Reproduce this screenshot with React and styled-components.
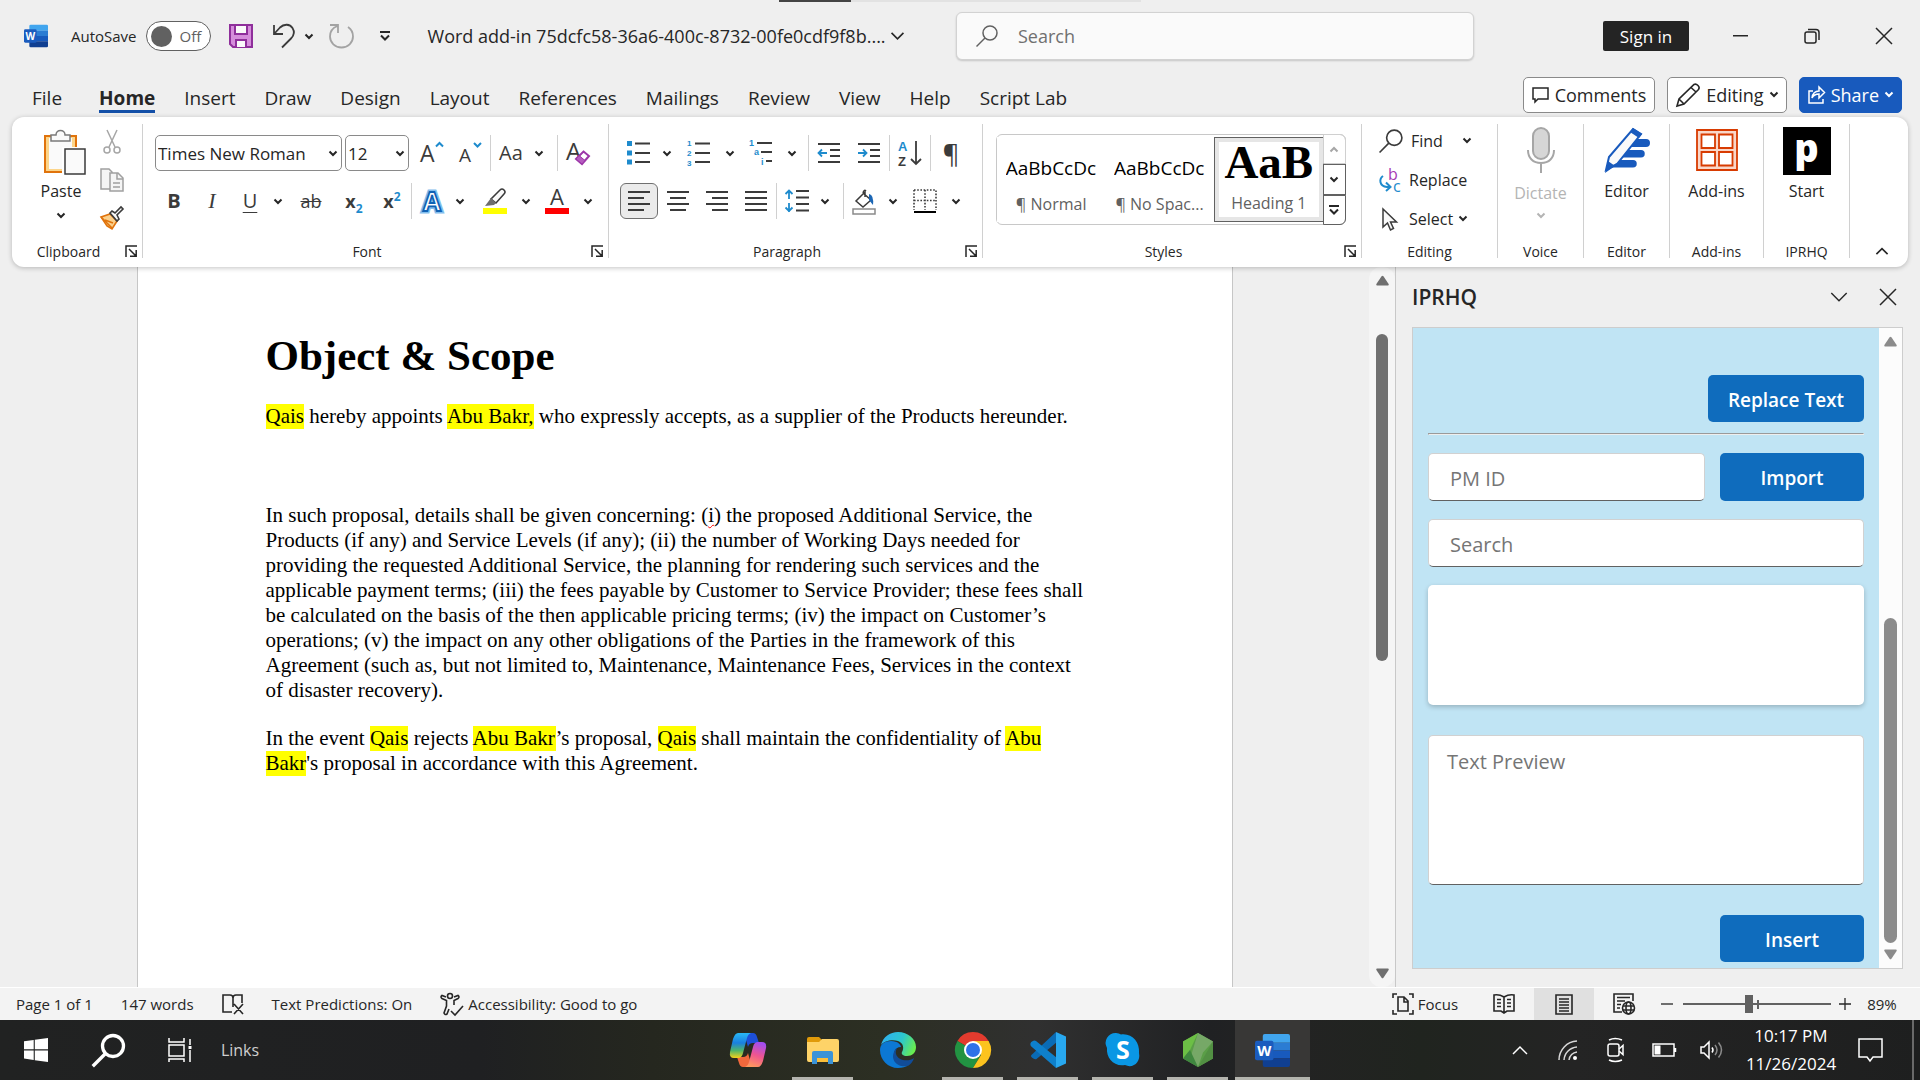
import React from "react";
import styled, { createGlobalStyle, css } from "styled-components";

const ui = `"Open Sans", "Noto Sans", sans-serif`;
const serif = `"Liberation Serif", "Times New Roman", serif`;
const ink = "#262626";
const line = "#d0d0d0";

const GlobalStyle = createGlobalStyle`
  * { box-sizing: border-box; }
  body { margin: 0; background: #efefef; color: ${ink}; font-family: ${ui}; font-size: 16px; overflow: hidden; }
  button, input, select, textarea { font-family: inherit; color: inherit; }
  button { cursor: pointer; }
  svg { display: block; flex: none; overflow: visible; }
`;

const Shell = styled.div`
  display: flex;
  flex-direction: column;
  height: 100vh;
`;

const PlainButton = styled.button`
  display: flex;
  align-items: center;
  justify-content: center;
  flex: none;
  width: ${(p) => (p.$w ? `${p.$w}px` : "auto")};
  height: ${(p) => p.$h || 36}px;
  padding: 0;
  border: 0;
  background: none;
`;

/* ---------- small shared drawings ---------- */

const Svg = ({ w = 24, h = w, vb, children, ...rest }) => (
  <svg width={w} height={h} viewBox={vb || `0 0 ${w} ${h}`} fill="none" aria-hidden="true" {...rest}>
    {children}
  </svg>
);

const Chevron = ({ w = 8, color = ink, up, stroke = 2 }) => (
  <Svg w={w} h={w / 2 + 1} vb="0 0 16 10" stroke={color} strokeWidth={(stroke * 16) / w}>
    <path d={up ? "M1 9l7-7 7 7" : "M1 1l7 7 7-7"} />
  </Svg>
);

const Cross = ({ s = 16 }) => (
  <Svg w={s} vb="0 0 16 16" stroke={ink} strokeWidth="1.5">
    <path d="M0 0l16 16M16 0L0 16" />
  </Svg>
);

const WordLogo = ({ s }) => (
  <Svg w={s} vb="0 0 36 36">
    <path d="M10 1h24a2 2 0 0 1 2 2v7H8V3a2 2 0 0 1 2-2z" fill="#41a5ee" />
    <path d="M8 10h28v8H8z" fill="#2b7cd3" />
    <path d="M8 18h28v8H8z" fill="#185abd" />
    <path d="M8 26h28v7a2 2 0 0 1-2 2H10a2 2 0 0 1-2-2z" fill="#103f91" />
    <rect x="0" y="8" width="19" height="20" rx="2" fill="#1b5cbe" />
    <text x="9.5" y="23.500" fontFamily="Open Sans" fontWeight="700" fontSize="15" fill="#fff" textAnchor="middle">W</text>
  </Svg>
);

/* ---------- title bar ---------- */

const TitleBar = styled.header`
  display: flex;
  align-items: center;
  flex: none;
  height: 72px;
  padding: 0 0 0 24px;
`;

const Row = styled.div`
  display: flex;
  align-items: center;
  gap: ${(p) => p.$gap || 0}px;
`;

const TitleLeft = styled(Row)`
  flex: 0 0 932px;
`;

const Loader = styled.div`
  position: absolute;
  top: 0;
  left: 779px;
  width: 362px;
  height: 2px;
  background: linear-gradient(90deg, #444 20%, #e2e2e2 20%);
`;

const AutoSave = styled.label`
  display: flex;
  align-items: center;
  gap: 9px;
  margin: 0 18px 0 23px;
  font-size: 15px;
  input { position: absolute; opacity: 0; width: 1px; height: 1px; }
`;

const Track = styled.span`
  display: flex;
  align-items: center;
  gap: 8px;
  width: 65px;
  height: 30px;
  padding-left: 4px;
  border: 1px solid #616161;
  border-radius: 15px;
  background: #fff;
  color: #616161;
  &::before {
    content: "";
    width: 21px;
    height: 21px;
    border-radius: 50%;
    background: #616161;
  }
`;

const DocName = styled.span`
  font-size: 18px;
  margin: 0 4px 0 38px;
  white-space: nowrap;
`;

const SearchBox = styled.label`
  display: flex;
  align-items: center;
  gap: 20px;
  flex: 0 1 518px;
  height: 48px;
  padding: 0 19px;
  border: 1px solid #d2d2d2;
  border-radius: 6px;
  background: #fafafa;
  box-shadow: 0 1px 2px rgba(0, 0, 0, 0.18);
  input {
    flex: 1;
    min-width: 0;
    border: 0;
    outline: 0;
    background: none;
    font-size: 18px;
    padding: 0;
  }
  input::placeholder { color: #707070; opacity: 1; }
`;

const WindowTools = styled(Row)`
  margin-left: auto;
`;

const SignIn = styled.button`
  width: 86px;
  height: 30px;
  margin-right: 15px;
  padding: 0;
  border: 0;
  border-radius: 2px;
  background: #242424;
  color: #fff;
  font-size: 17px;
`;

/* ---------- tabs ---------- */

const TabBar = styled.nav`
  display: flex;
  align-items: center;
  flex: none;
  height: 45px;
  padding: 0 18px 0 32px;
`;

const Tabs = styled.div`
  display: flex;
  gap: 29px;
`;

const Tab = styled.button`
  height: 36px;
  padding: 5px 0 0;
  border: 0;
  background: none;
  font-size: 19px;
  line-height: 32px;
  font-weight: ${(p) => (p.$on ? 700 : 400)};
  border-bottom: 3px solid ${(p) => (p.$on ? "#1450a8" : "transparent")};
  &:first-child { margin-right: 8px; }
`;

const TabActions = styled(Row)`
  margin-left: auto;
  gap: 12px;
`;

const ActionButton = styled.button`
  display: flex;
  align-items: center;
  gap: 6px;
  height: 36px;
  padding: 0 8px;
  border: 1px solid ${(p) => (p.$primary ? "#185abd" : "#8a8a8a")};
  border-radius: 5px;
  background: ${(p) => (p.$primary ? "#185abd" : "#fff")};
  color: ${(p) => (p.$primary ? "#fff" : ink)};
  font-size: 18px;
`;

/* ---------- ribbon ---------- */

const Ribbon = styled.section`
  display: flex;
  flex: none;
  height: 150px;
  margin: 0 12px;
  padding: 7px 0 9px;
  border-radius: 12px;
  background: #fff;
  box-shadow: 0 1px 5px rgba(0, 0, 0, 0.24);
  position: relative;
  z-index: 1;
`;

const GroupBox = styled.div`
  display: flex;
  flex-direction: column;
  flex: 0 0 ${(p) => p.$w}px;
  border-right: 1px solid ${line};
`;

const GroupBody = styled.div`
  flex: 1;
  min-height: 0;
`;

const GroupFoot = styled.div`
  display: flex;
  align-items: center;
  height: 14px;
  padding-right: ${(p) => (p.$launch ? 5 : 0)}px;
  font-size: 14px;
  line-height: 14px;
  span { flex: 1; text-align: center; padding-top: 2px; }
`;

const Launcher = () => (
  <PlainButton $w={12} $h={12} aria-label="More options">
    <Svg w={12} stroke={ink} strokeWidth="1.5">
      <path d="M1 12V1h11M4 4l7 7M11.200 5v6.200H5" />
    </Svg>
  </PlainButton>
);

const Group = ({ w, label, launch, children }) => (
  <GroupBox $w={w}>
    <GroupBody>{children}</GroupBody>
    <GroupFoot $launch={launch}>
      <span>{label}</span>
      {launch && <Launcher />}
    </GroupFoot>
  </GroupBox>
);

const ToolRows = styled.div`
  display: flex;
  flex-direction: column;
  gap: 12px;
  padding: 11px 0 0 ${(p) => p.$left}px;
`;

const Tool = styled(PlainButton)`
  ${(p) =>
    p.$on &&
    css`
      border: 1px solid #707070;
      border-radius: 6px;
      background: #ebebeb;
    `}
`;

const Rule = styled.span`
  width: 1px;
  height: 36px;
  background: ${line};
  margin-left: ${(p) => p.$gap || 0}px;
`;

const Combo = styled.span`
  display: flex;
  align-items: center;
  width: ${(p) => p.$w}px;
  height: 36px;
  margin-right: 3px;
  padding: 0 4px 0 2px;
  border: 1px solid #8a8a8a;
  border-radius: 5px;
  select {
    appearance: none;
    flex: 1;
    min-width: 0;
    border: 0;
    outline: 0;
    background: none;
    font-size: 17px;
    padding: 0;
  }
`;

const Letter = styled.span`
  font-size: ${(p) => p.$s || 20}px;
  line-height: 24px;
  font-weight: ${(p) => (p.$bold ? 700 : 400)};
  font-style: ${(p) => (p.$italic ? "italic" : "normal")};
  font-family: ${(p) => (p.$italic ? serif : ui)};
  text-decoration: ${(p) => p.$deco || "none"};
  text-underline-offset: 4px;
  text-decoration-thickness: 1px;
  color: #3b3b3b;
  sub, sup { font-size: 12px; line-height: 0; color: #1e8bcd; }
`;

const Drop = ({ w = 18, label = "More" }) => (
  <PlainButton $w={w} aria-label={label}>
    <Chevron />
  </PlainButton>
);

const ClipRow = styled.div`
  display: flex;
  justify-content: space-between;
  padding: 0 12px 0 26px;
`;

const BigButton = styled.button`
  display: flex;
  flex-direction: column;
  align-items: center;
  gap: ${(p) => p.$gap || 5}px;
  width: ${(p) => (p.$w ? `${p.$w}px` : "100%")};
  padding: 3px 0 0;
  border: 0;
  background: none;
  font-size: 16px;
  line-height: 22px;
  color: ${(p) => (p.$off ? "#b4b4b4" : ink)};
`;

const ClipTools = styled.div`
  display: flex;
  flex-direction: column;
  align-items: center;
  gap: 2px;
  width: 36px;
`;

const Gallery = styled.div`
  display: flex;
  height: 91px;
  margin: 10px 15px 0 13px;
  border: 1px solid #c8c8c8;
  border-radius: 6px;
`;

const StyleItem = styled.button`
  display: flex;
  flex-direction: column;
  align-items: center;
  justify-content: flex-end;
  flex: 1;
  min-width: 0;
  margin: 2px 0;
  padding: 0 0 3px;
  border: ${(p) => (p.$on ? "1px solid #616161" : "0")};
  background: #fff;
  box-shadow: ${(p) => (p.$on ? "inset 0 0 0 4px #e6e6e6" : "none")};
  font-size: 16px;
  line-height: 30px;
  color: #616161;
  overflow: hidden;
  white-space: nowrap;
`;

const Sample = styled.span`
  width: 91px;
  overflow: hidden;
  font-size: 19px;
  line-height: 26px;
  color: #000;
  text-align: left;
  margin-bottom: 8px;
`;

const BigSample = styled.span`
  font: 700 47px/44px ${serif};
  color: #000;
  margin-bottom: 4px;
`;

const GalleryNav = styled.div`
  display: flex;
  flex-direction: column;
  flex: none;
  width: 23px;
  margin: -1px;
`;

const NavStep = styled(PlainButton)`
  flex: 1;
  width: 100%;
  border: 1px solid ${(p) => (p.$off ? "#d0d0d0" : "#616161")};
  border-radius: ${(p) => p.$r || "0"};
`;

const FindList = styled.div`
  display: flex;
  flex-direction: column;
  margin-top: -3px;
  padding-left: 17px;
`;

const FindButton = styled.button`
  display: flex;
  align-items: center;
  height: 39px;
  padding: 0;
  border: 0;
  background: none;
  font-size: 16px;
  gap: ${(p) => p.$gap || 0}px;
  svg:first-child { margin-right: 8px; }
`;

const CollapseBox = styled.div`
  display: flex;
  flex: 1;
  align-items: flex-end;
  justify-content: center;
  padding-left: 6px;
`;

/* ---------- workspace ---------- */

const Workspace = styled.main`
  display: flex;
  flex: 1;
  min-height: 0;
`;

const Canvas = styled.div`
  display: flex;
  justify-content: center;
  flex: 1;
  min-width: 0;
`;

const Page = styled.article`
  width: 1096px;
  padding: 64px 120px 0 128px;
  border: solid #c6c6c6;
  border-width: 0 1px;
  background: #fff;
  color: #000;
  font-family: ${serif};
`;

const Heading = styled.h1`
  margin: 0 0 23px;
  font-size: 43px;
  line-height: 50px;
`;

const Para = styled.p`
  margin: 0 0 ${(p) => p.$after || 0}px;
  font-size: 21px;
  line-height: 25px;
  white-space: nowrap;
`;

const Mark = styled.mark`
  background: #ff0;
  color: inherit;
  padding-bottom: 1px;
`;

const Misspelt = styled.span`
  text-decoration: underline wavy #f00 1px;
  text-underline-offset: 2px;
`;

const ScrollTrack = styled.div`
  display: flex;
  flex-direction: column;
  align-items: center;
  flex: none;
  width: ${(p) => p.$w}px;
  padding: 8px 0;
  border-radius: ${(p) => p.$r || 0}px;
  background: ${(p) => p.$bg};
`;

const Thumb = styled.div`
  width: ${(p) => p.$w}px;
  flex: 0 0 ${(p) => p.$len}%;
  border-radius: 7px;
  background: ${(p) => p.$c};
`;

const ThumbRail = styled.div`
  display: flex;
  flex-direction: column;
  flex: 1;
  width: 100%;
  align-items: center;
`;

const Gap = styled.div`
  flex: 0 0 ${(p) => p.$len}%;
`;

const Triangle = ({ down, c, w = 13, h = 11 }) => (
  <Svg w={w} h={h} vb="0 0 14 11" fill={c}>
    <path d={down ? "M1 0h12q1.200 0.500 0.600 1.600L8 10q-1 1.300-2 0L0.400 1.600Q-0.200 0.500 1 0z" : "M1 11h12q1.200-0.500 0.600-1.600L8 1Q7-0.300 6 1L0.400 9.400Q-0.200 10.500 1 11z"} />
  </Svg>
);

const Pane = styled.aside`
  display: flex;
  flex-direction: column;
  flex: 0 0 525px;
  border-left: 1px solid #c8c8c8;
  padding: 0 17px 18px 16px;
`;

const PaneHead = styled.div`
  display: flex;
  align-items: center;
  flex: none;
  height: 60px;
  h2 { flex: 1; margin: 0; font-size: 21px; font-weight: 600; }
`;

const PaneFrame = styled.div`
  display: flex;
  flex: 1;
  min-height: 0;
  border: 1px solid #cdcdcd;
`;

const PaneForm = styled.form`
  display: flex;
  flex-direction: column;
  justify-content: flex-end;
  flex: 1;
  min-width: 0;
  padding: 0 15px 6px;
  background: #c0e4f4;
  hr { width: 100%; margin: 11px 0 18px; }
`;

const FormRow = styled.div`
  display: flex;
  justify-content: flex-end;
  gap: 15px;
`;

const field = css`
  border: 1px solid #d1d1d1;
  border-bottom-color: #616161;
  border-radius: 5px;
  outline: 0;
  background: #fff;
  font-size: 20px;
  width: 100%;
  &::placeholder { color: #757575; opacity: 1; }
`;

const Field = styled.input`
  ${field}
  flex: 1;
  min-width: 0;
  height: 48px;
  padding: 2px 21px 0;
`;

const SearchRow = styled.div`
  display: flex;
  margin: 18px 0;
`;

const Results = styled.div`
  height: 120px;
  border-radius: 5px;
  background: #fff;
  box-shadow: 0 2px 5px rgba(0, 0, 0, 0.22);
`;

const Preview = styled.textarea`
  ${field}
  display: block;
  height: 150px;
  margin: 30px 0;
  padding: 12px 18px;
  line-height: 28px;
  resize: none;
`;

const Submit = styled.button`
  width: ${(p) => p.$w || 144}px;
  height: ${(p) => p.$h || 47}px;
  padding: 2px 0 0;
  border: 0;
  border-radius: 5px;
  background: #0f6cbd;
  color: #fff;
  font-size: 19px;
  font-weight: 600;
`;

/* ---------- status bar ---------- */

const StatusBar = styled.footer`
  display: flex;
  align-items: center;
  flex: none;
  height: 33px;
  padding: 0 9px 0 16px;
  border-top: 1px solid #fff;
  background: #f3f3f3;
  font-size: 15px;
`;

const StatusButton = styled.button`
  display: flex;
  align-items: center;
  justify-content: center;
  gap: 4px;
  height: 32px;
  padding: 0;
  border: 0;
  background: ${(p) => (p.$on ? "#e0e0e0" : "none")};
  width: ${(p) => (p.$w ? `${p.$w}px` : "auto")};
  font-size: 15px;
`;

const StatusRight = styled(Row)`
  margin-left: auto;
`;

const ZoomRange = styled.input`
  appearance: none;
  width: 148px;
  height: 18px;
  margin: 0 6px 0 3px;
  background: linear-gradient(#616161, #616161) 74px 50% / 2px 9px no-repeat,
    linear-gradient(#616161, #616161) 0 50% / 100% 2px no-repeat;
  &::-webkit-slider-thumb {
    appearance: none;
    width: 8px;
    height: 18px;
    background: #616161;
  }
`;

/* ---------- task bar ---------- */

const TaskBar = styled.div`
  display: flex;
  flex: none;
  height: 60px;
  background: linear-gradient(90deg, #212222, #1f2022 25%, #25271f 34%, #2c2f23 46%, #303030 54%, #202123 63%, #232323 67%, #20241f 74%, #242424 82%, #1e1f1f);
  color: #fff;
`;

const TaskStart = styled(Row)`
  flex: 0 0 37%;
  color: #cfcfcf;
`;

const TaskButton = styled.button`
  display: flex;
  align-items: center;
  justify-content: center;
  width: ${(p) => p.$w || 75}px;
  height: 60px;
  padding: 0;
  border: 0;
  background: none;
  color: inherit;
  font-size: 16px;
  ${(p) =>
    p.$open &&
    css`
      background: ${p.$on ? "linear-gradient(#b4b4ae, #b4b4ae) 0 100% / 100% 3px no-repeat, #383736" : "linear-gradient(#b4b4ae, #b4b4ae) 50% 100% / 61px 3px no-repeat"};
    `}
`;

const Tray = styled(Row)`
  flex: 1;
  justify-content: flex-end;
  align-items: center;
`;

const Clock = styled.time`
  width: 110px;
  text-align: center;
  font-size: 17px;
  line-height: 28px;
`;

const Peek = styled.span`
  align-self: stretch;
  width: 8px;
  border-left: 2px solid #6a6a6a;
  margin-left: 18px;
`;

/* ---------- icon drawings ---------- */

const dark = "#3b3b3b";
const blue = "#1e8bcd";

const SaveIcon = () => (
  <Svg w={24} stroke="#8f2f9b" strokeWidth="2">
    <path d="M1 1h22v22H4l-3-3z" fill="#d58ddb" />
    <path d="M6 1h12v9H6zM7 23v-7h10v7" fill="#fafafa" />
  </Svg>
);
const UndoIcon = () => (
  <Svg w={24} stroke={dark} strokeWidth="1.800">
    <path d="M2 1v9h9M2 10L8 3.500C12-0.500 18 0 20.500 4s1 8-1.500 10.500L10 23.500" />
  </Svg>
);
const RedoIcon = () => (
  <Svg w={26} h={24} stroke="#a3a3a3" strokeWidth="1.800">
    <path d="M1 1h8v8M8.500 2C3 4 1 8.500 1 12.500a11.500 11 0 0 0 23 0c0-4-2-7.500-5-9.500" />
  </Svg>
);
const MoreCommands = () => (
  <Svg w={10} h={10} stroke={ink} strokeWidth="2">
    <path d="M0 1h10M1 4.500l4 4 4-4" />
  </Svg>
);
const Lens = ({ s = 22, c = "#616161", sw = 1.5 }) => (
  <Svg w={s} vb="0 0 22 22" stroke={c} strokeWidth={sw}>
    <circle cx="14" cy="8" r="7" />
    <path d="M9 13L0.500 21.500" />
  </Svg>
);
const PasteIcon = () => (
  <Svg w={48} h={42} vb="-7 -3 48 42" strokeWidth="2">
    <path d="M1 6h31v36H1z" fill="#fcd58a" stroke="#e0730c" />
    <path d="M5 8h23v31H5z" fill="#fafafa" />
    <path d="M7 11V5h5c0-6 9-6 9 0h5v6z" fill="#fafafa" stroke="#7a7a7a" strokeWidth="1.500" />
    <path d="M18 17h23v28H18z" fill="#fff" />
    <path d="M21 19h20v25H21z" fill="#fafafa" stroke={dark} strokeWidth="1.500" />
  </Svg>
);
const CutIcon = () => (
  <Svg w={18} h={24} stroke="#a6a6a6" strokeWidth="1.500">
    <path d="M4 0l8 17M14 0L6 17" />
    <circle cx="4" cy="20" r="3" />
    <circle cx="14" cy="20" r="3" />
  </Svg>
);
const CopyIcon = () => (
  <Svg w={24} stroke="#a0a0a0" strokeWidth="1.500">
    <path d="M1 1h8l3 3v17H1z" fill="#f5f5f5" />
    <path d="M10 5h8l5 5v13H10z" fill="#f5f5f5" />
    <path d="M17 5v6h6M13 15h7M13 19h7" />
  </Svg>
);
const PainterIcon = () => (
  <Svg w={24} strokeWidth="1.600">
    <path d="M1 11l9-3 7 7-5 8-5-3z" fill="#fbd08b" stroke="#e0730c" />
    <path d="M1 11l11 11M5 14l8 3" stroke="#e0730c" />
    <path d="M10 7l2-2 3 2 6-6 2 2-6 6 2 4-2 2z" fill="#fafafa" stroke={dark} />
  </Svg>
);
const CaseUp = ({ down }) => (
  <Svg w={24}>
    <text x="0" y={21} fontFamily="Open Sans" fontSize={down ? 19 : 23} fill={dark}>A</text>
    <path d={down ? "M15 2l3.500 3.500L22 2" : "M16 5.500L19.500 2 23 5.500"} stroke={blue} strokeWidth="2" />
  </Svg>
);
const ClearFmt = () => (
  <Svg w={24}>
    <text x="0" y="19" fontFamily="Open Sans" fontSize="24" fill={dark}>A</text>
    <path d="M17.500 10.500l5.500 4.500-7 8-6-5z" fill="#fff" stroke="#9c36a8" strokeWidth="2" />
    <path d="M10 18l3-3.500 6 5L16 23z" fill="#b65cc0" stroke="#9c36a8" />
  </Svg>
);
const TextFx = () => (
  <Svg w={24}>
    <text x="12" y="22" textAnchor="middle" fontFamily="Open Sans" fontWeight="700" fontSize="26" fill="#fff" stroke="#83beec" strokeWidth="5" paintOrder="stroke">A</text>
    <path d="" />
    <text x="12" y="22" textAnchor="middle" fontFamily="Open Sans" fontWeight="700" fontSize="26" fill="#fff" stroke="#0f62b4" strokeWidth="1.800">A</text>
  </Svg>
);
const HighlightIcon = () => (
  <Svg w={24} h={26}>
    <path d="M8 11L17 2q2-2 4 0t0 4l-8 9z" stroke={dark} strokeWidth="1.600" fill="#fafafa" />
    <path d="M8 10l5 5-2 2-9 1z" fill="#6e6e6e" />
    <path d="M0 20h24v6H0z" fill="#ff0" />
  </Svg>
);
const FontColor = () => (
  <Svg w={24} h={26}>
    <text x="12" y="17" textAnchor="middle" fontFamily="Open Sans" fontSize="22" fill={dark}>A</text>
    <path d="M0 20h24v6H0z" fill="#f00" />
  </Svg>
);
const ListIcon = ({ kind }) => (
  <Svg w={24}>
    <g stroke={dark} strokeWidth="1.800">
      {kind === "multi" ? <path d="M8 2h15M12 11h11M17 20h6" /> : <path d="M8 2.500h15M8 12h15M8 21h15" />}
    </g>
    {kind === "bullet" && <path d="M0 0h5v5H0zM0 9.500h5v5H0zM0 18.500h5v5H0z" fill={blue} />}
    {kind === "number" && (
      <g fontFamily="Liberation Sans" fontWeight="700" fontSize="8" fill={blue}>
        <text x="0" y="5">1</text>
        <text x="0" y="15">2</text>
        <text x="0" y="25">3</text>
      </g>
    )}
    {kind === "multi" && (
      <g fontFamily="Liberation Sans" fontWeight="700" fontSize="9" fill={blue}>
        <text x="0" y="5">1</text>
        <text x="5" y="14">a</text>
        <text x="12" y="24">i</text>
      </g>
    )}
  </Svg>
);
const IndentIcon = ({ right }) => (
  <Svg w={22} h={20} strokeWidth="1.800">
    <path d="M0 1h22M12 7h10M12 13h10M0 19h22" stroke={dark} />
    <path d={right ? "M0 10h8M5 6.500L8.500 10 5 13.500" : "M1 10h8M4 6.500L0.500 10 4 13.500"} stroke={blue} />
  </Svg>
);
const SortIcon = () => (
  <Svg w={26} h={26}>
    <g fontFamily="Liberation Sans" fontWeight="700" fontSize="13">
      <text x="1" y="11" fill={blue}>A</text>
      <text x="1" y="26" fill={dark}>Z</text>
    </g>
    <path d="M19 1v23M14 19l5 5 5-5" stroke={dark} strokeWidth="1.800" />
  </Svg>
);
const AlignIcon = ({ d }) => (
  <Svg w={22} h={20} stroke={dark} strokeWidth="1.800">
    <path d={d} />
  </Svg>
);
const SpacingIcon = () => (
  <Svg w={24} strokeWidth="1.800">
    <path d="M11 2h13M11 8.500h13M11 15h13M11 21.500h13" stroke={dark} />
    <path d="M4 1v9M0.500 5L4 1.500 7.500 5M4 14v9M0.500 18.500L4 22l3.500-3.500" stroke={blue} />
  </Svg>
);
const ShadeIcon = () => (
  <Svg w={24} h={25} strokeWidth="1.500">
    <path d="M11 4l8 7-8 7-7-6 9-9v5M11 4q1-4 3-2" stroke={dark} />
    <path d="M17 5q5 1 4 11l-4-5z" fill="#1b66b5" />
    <path d="M1 20h22v5H1z" fill="#fff" stroke="#8a8a8a" />
  </Svg>
);
const BorderIcon = () => (
  <Svg w={24}>
    <path d="M1 1h22v20M1 1v20M12 1v20M1 11.500h22" stroke={dark} strokeWidth="1.600" strokeDasharray="1.600 1.600" />
    <path d="M1 23h22" stroke="#000" strokeWidth="2" />
  </Svg>
);
const ReplaceIcon = () => (
  <Svg w={22} h={24}>
    <g fontFamily="Open Sans" fontSize="16">
      <text x="9" y="12" fill="#a63ab4">b</text>
      <text x="14" y="24" fill={blue}>c</text>
    </g>
    <path d="M4 8c-4 3-4 10 4 11h3M7 14.500l4.500 4.500L7 23" stroke={blue} strokeWidth="2" />
  </Svg>
);
const CursorIcon = () => (
  <Svg w={22} h={24} stroke={dark} strokeWidth="1.500">
    <path d="M4 2v18l4.500-4 3 7 3-1.500-3-6.500h6z" fill="#fafafa" />
  </Svg>
);
const MicIcon = () => (
  <Svg w={28} h={46} stroke="#a6a6a6" strokeWidth="2">
    <rect x="6" y="1" width="16" height="31" rx="8" fill="#d6d6d6" />
    <path d="M1 23c0 8 5 13 13 13s13-5 13-13M14 36v10" />
  </Svg>
);
const EditorIcon = () => (
  <Svg w={46} h={46}>
    <path d="M26 12h16a4 4 0 0 1 0 8H20zM18 23h19a3.700 3.700 0 0 1 0 7.500H14zM12 33h17a3.700 3.700 0 0 1 0 7.500H7z" fill="#185abd" />
    <path d="M2 43L5 30 29 2l8 5-24 30z" fill="#fafafa" stroke="#185abd" strokeWidth="2" />
    <path d="M29 1l9 6-3 4-9-6zM1 46l3-12 7 5z" fill="#185abd" />
  </Svg>
);
const AddinsIcon = () => (
  <Svg w={42} h={46} vb="0 -2 42 46" stroke="#d83b01" strokeWidth="1.800">
    <path d="M1 1h40v40H1z" fill="#f9d7c9" />
    <path d="M5.500 5.500h13.500v13.500h-13.500zM23 5.500h13.500v13.500h-13.500zM5.500 23h13.500v13.500h-13.500zM23 23h13.500v13.500h-13.500z" fill="#fff" />
  </Svg>
);
const StartLogo = styled.span`
  display: flex;
  align-items: center;
  justify-content: center;
  width: 48px;
  height: 48px;
  padding-bottom: 9px;
  background: #000;
  color: #fff;
  font: 800 38px/38px ${ui};
`;
const ProofIcon = () => (
  <Svg w={22} stroke={ink} strokeWidth="1.600">
    <path d="M10 19H1V2h7q3 0 3 3 0-3 3-3h6v8M11 5v9M12 11l9 10M21 11l-9 10" />
  </Svg>
);
const AccessIcon = () => (
  <Svg w={24} stroke={ink} strokeWidth="1.600">
    <circle cx="10" cy="4" r="2.500" />
    <path d="M6 5L2 3.500Q0 5 2 6.500l4.500 2V14L4 21q1 2.500 3 1l2-5M14 5l4-1.500q2 1.500 0 3l-4 2V13M11 19l4 4 8-9" />
  </Svg>
);
const FocusIcon = () => (
  <Svg w={22} stroke={ink} strokeWidth="1.600">
    <path d="M5 1H1v4M17 1h4v4M5 21H1v-4M17 21h4v-4M6 4h6l4 4v10H6zM12 4v5h4" />
  </Svg>
);
const ReadIcon = () => (
  <Svg w={22} h={20} stroke={ink} strokeWidth="1.600">
    <path d="M11 3Q6 0 1 1v16h7l3 2 3-2h7V1q-5-1-10 2zM11 3v15M4 5.500h4M4 9h4M4 12.500h4M14 5.500h4M14 9h4M14 12.500h4" />
  </Svg>
);
const PrintIcon = () => (
  <Svg w={18} h={21} stroke={ink} strokeWidth="1.600">
    <path d="M1 1h16v19H1zM4 5h10M4 8h10M4 11h10M4 14h10M4 17h10" />
  </Svg>
);
const WebIcon = () => (
  <Svg w={22} stroke={ink} strokeWidth="1.600">
    <path d="M20 8V1H1v18h8M4 4.500h13M4 8h8M4 11.500h4M4 15h3" />
    <circle cx="15.500" cy="15" r="6" />
    <ellipse cx="15.500" cy="15" rx="2.500" ry="6" />
    <path d="M10 13h11M10 17h11" />
  </Svg>
);
const PlusMinus = ({ plus }) => (
  <Svg w={12} stroke={ink} strokeWidth="1.300">
    <path d={plus ? "M0 6h12M6 0v12" : "M0 6h12"} />
  </Svg>
);

const WindowsIcon = () => (
  <Svg w={24}>
    <path fill="#fff" d="M0 3.200l9.700-1.300v9.400H0zM10.800 1.700L24 0v11.300H10.800zM0 12.500h9.700v9.400L0 20.600zM10.800 12.500H24V24l-13.200-1.800z" />
  </Svg>
);
const TaskViewIcon = () => (
  <Svg w={24} stroke="#fff" strokeWidth="1.500">
    <path d="M1 0v4h15V0M1 7h15v11H1zM1 24v-3h15v3M22 1v6M22 12v12" />
    <path d="M20.500 8h3v3h-3z" fill="#fff" stroke="none" />
  </Svg>
);
const CopilotIcon = () => (
  <Svg w={36} h={34}>
    <defs>
      <linearGradient id="cpA" x1="0" y1="0" x2="0" y2="1">
        <stop offset="0" stopColor="#29b8f5" />
        <stop offset="0.400" stopColor="#1a7fe0" />
        <stop offset="0.700" stopColor="#4fb56a" />
        <stop offset="1" stopColor="#f5d21a" />
      </linearGradient>
      <linearGradient id="cpB" x1="0.600" y1="0" x2="0.300" y2="1">
        <stop offset="0" stopColor="#a24df0" />
        <stop offset="0.500" stopColor="#ef5590" />
        <stop offset="1" stopColor="#ff9a5c" />
      </linearGradient>
    </defs>
    <path d="M14 0h9q3 0 4 4l2 6h-6q-4 0-5 4z" fill="#1d4fd8" />
    <path d="M22 34h-9q-3 0-4-4l-2-6h6q4 0 5-4z" fill="#f2683c" />
    <path d="M8 0h13q-3 1-4 5l-4 15q-1 5-5 5H4q-5 0-4-6L3 6q2-6 5-6z" fill="url(#cpA)" />
    <path d="M28 34H15q3-1 4-5l4-15q1-5 5-5h4q5 0 4 6l-3 13q-2 6-5 6z" fill="url(#cpB)" />
  </Svg>
);
const FolderIcon = () => (
  <Svg w={32} h={27}>
    <path d="M0 2q0-2 2-2h10l3 3-3 4H0z" fill="#e09a0a" />
    <path d="M0 5h12l3-3h15q2 0 2 2v19q0 2-2 2H2q-2 0-2-2z" fill="#fed368" />
    <path d="M5 27V16q0-2 2-2h17q2 0 2 2v11h-5v-6H10v6z" fill="#3a93d8" />
    <path d="M10 21h11v4H10z" fill="#fbbf3a" />
  </Svg>
);
const EdgeIcon = () => (
  <Svg w={36}>
    <defs>
      <linearGradient id="egA" x1="0" y1="0.300" x2="1" y2="0.600">
        <stop offset="0" stopColor="#2fb0f0" />
        <stop offset="0.550" stopColor="#2cc7cd" />
        <stop offset="1" stopColor="#6bee4c" />
      </linearGradient>
    </defs>
    <path d="M1 13C3 5 10 0 18 0c10 0 18 7 18 15 0 6-4 9-9 9-4 0-6-2-5-4 2-3 2-9-4-11C12 7 4 9 1 13z" fill="url(#egA)" />
    <path d="M0 18C0 12 5 9 11 9c7 0 10 4 10 6-7 0-9 8-5 14 3 4 9 6 13 4-3 2-7 3-11 3C8 36 0 28 0 18z" fill="#0c78d4" />
    <path d="M14 20c-4 9 5 16 13 14 4-1 6-5 7-8-5 4-16 3-18-4-0.500-2 0-4 1-6-2 1-2.500 2.500-3 4z" fill="#114c98" />
  </Svg>
);
const ChromeIcon = () => (
  <Svg w={36}>
    <path d="M18 18L2.400 9A18 18 0 0 1 33.600 9z" fill="#e33b2e" />
    <path d="M18 18L2.400 9A18 18 0 0 0 18 36l8-13.500z" fill="#229342" />
    <path d="M18 9h15.600A18 18 0 0 1 18 36l8-13z" fill="#fcc31e" />
    <circle cx="18" cy="18" r="9" fill="#fff" />
    <circle cx="18" cy="18" r="7" fill="#2f72e8" />
  </Svg>
);
const CodeIcon = () => (
  <Svg w={36}>
    <path d="M26 0L2.500 22q-3 2 0 4t4 1L27 10z" fill="#0a6bb5" />
    <path d="M26 36L0.800 14Q-0.500 11 2 9.500T6 9l21 17z" fill="#0e80cc" />
    <path d="M26 0l10 4.500v27L26 36z" fill="#28a8f0" />
  </Svg>
);
const SkypeIcon = () => (
  <Svg w={34}>
    <path d="M10 0a10 10 0 0 0-9 15c-1 10 7 19 18 17 8 4 16-3 14-12C34 9 26 0 15 1.500Q13 0 10 0z" fill="#0a97e4" />
    <text x="17" y="26" textAnchor="middle" fontFamily="Open Sans" fontWeight="700" fontSize="25" fill="#fff">S</text>
  </Svg>
);
const NodeIcon = () => (
  <Svg w={30} h={34}>
    <path d="M15 0l15 8.500v17L15 34 0 25.500v-17z" fill="#5a9e47" />
    <path d="M15 0L7 17 0 25.500v-17z" fill="#6cbf45" />
    <path d="M15 0l15 8.500-10 11L15 34l-8-8z" fill="#76a867" />
    <path d="M0 25.500L7 17l8 17z" fill="#3f873f" />
    <path d="M30 8.500v17L15 34z" fill="#529043" />
  </Svg>
);
const WifiIcon = () => (
  <Svg w={20} stroke="#d8d8d8" strokeWidth="1.500">
    <path d="M1 20A19 19 0 0 1 19 1M6 20A14 14 0 0 1 19 7M11 20A9 9 0 0 1 19 12" />
    <circle cx="17" cy="18" r="2" fill="#fff" stroke="none" />
  </Svg>
);
const CameraIcon = () => (
  <Svg w={18} h={24} stroke="#fff" strokeWidth="1.500">
    <path d="M2 2q6-3 13 0M2 22q6 3 13 0" />
    <rect x="1" y="6" width="11" height="12" rx="2" />
    <path d="M12 11l4-3.500v9L12 13" />
  </Svg>
);
const BatteryIcon = () => (
  <Svg w={24} h={14} stroke="#fff" strokeWidth="1.500">
    <path d="M1 1h21v12H1zM23.500 5v4" />
    <path d="M2.500 2.500h6v9h-6z" fill="#fff" stroke="none" />
  </Svg>
);
const SoundIcon = () => (
  <Svg w={24} h={18} stroke="#fff" strokeWidth="1.500">
    <path d="M1 6h3l5-5v16l-5-5H1zM12 6.500q2 2.500 0 5" />
    <path d="M15 4q4 5 0 10M18.500 1.500q6 7.500 0 15" stroke="#8a8a8a" />
  </Svg>
);
const NoteIcon = () => (
  <Svg w={25} h={24} stroke="#fff" strokeWidth="1.500">
    <path d="M1 1h23v18h-9l-3 4-3-4H1z" />
  </Svg>
);

/* ---------- page parts ---------- */

const TABS = ["File", "Home", "Insert", "Draw", "Design", "Layout", "References", "Mailings", "Review", "View", "Help", "Script Lab"];

const Scrollbar = ({ w, r, bg, c, thumb, gap, len }) => (
  <ScrollTrack $w={w} $r={r} $bg={bg} aria-hidden="true">
    <Triangle c={c} />
    <ThumbRail>
      <Gap $len={gap} />
      <Thumb $w={thumb} $len={len} $c={c} />
    </ThumbRail>
    <Triangle down c={c} />
  </ScrollTrack>
);

const TitleSection = () => (
  <TitleBar>
    <Loader />
    <TitleLeft>
      <WordLogo s={24} />
      <AutoSave>
        AutoSave
        <input type="checkbox" />
        <Track>Off</Track>
      </AutoSave>
      <Row $gap={19}>
        <PlainButton aria-label="Save"><SaveIcon /></PlainButton>
        <Row $gap={4}>
          <PlainButton aria-label="Undo"><UndoIcon /></PlainButton>
          <Drop label="Undo list" />
        </Row>
      </Row>
      <Row $gap={14}>
        <PlainButton $w={48} aria-label="Redo"><RedoIcon /></PlainButton>
        <PlainButton aria-label="Customize toolbar"><MoreCommands /></PlainButton>
      </Row>
      <DocName>Word add-in 75dcfc58-36a6-400c-8732-00fe0cdf9f8b....</DocName>
      <PlainButton aria-label="File menu"><Chevron w={15} stroke={1.8} /></PlainButton>
    </TitleLeft>
    <SearchBox>
      <Lens />
      <input type="text" placeholder="Search" aria-label="Search" />
    </SearchBox>
    <WindowTools>
      <SignIn>Sign in</SignIn>
      <PlainButton $w={72} aria-label="Minimize"><Svg w={15} h={2}><path d="M0 0h15v1.500H0z" fill={ink} /></Svg></PlainButton>
      <PlainButton $w={72} aria-label="Restore">
        <Svg w={16} stroke={ink} strokeWidth="1.500"><rect x="1" y="4" width="11" height="11" rx="2" /><path d="M4 1.500h8q3 0 3 3V12" /></Svg>
      </PlainButton>
      <PlainButton $w={72} aria-label="Close"><Cross /></PlainButton>
    </WindowTools>
  </TitleBar>
);

const TabSection = () => (
  <TabBar>
    <Tabs>
      {TABS.map((t) => (
        <Tab key={t} $on={t === "Home"}>{t}</Tab>
      ))}
    </Tabs>
    <TabActions>
      <ActionButton>
        <Svg w={17} h={16} stroke={ink} strokeWidth="1.500"><path d="M1 1h15v11H6l-3 3v-3H1z" /></Svg>
        Comments
      </ActionButton>
      <ActionButton>
        <Svg w={24} stroke={ink} strokeWidth="1.600"><path d="M1 23l2-7L18 1.500q2-1 4 1t0.500 4L8 21zM15 4.500L20 9M3 16l5 5" /></Svg>
        Editing
        <Chevron />
      </ActionButton>
      <ActionButton $primary>
        <Svg w={17} h={18} stroke="#fff" strokeWidth="1.500"><path d="M5 5H1v12h14v-4M4 12q1-7 7-7V1l5.500 5.500L11 12V8Q6 8 4 12z" /></Svg>
        Share
        <Chevron color="#fff" />
      </ActionButton>
    </TabActions>
  </TabBar>
);

const ClipboardGroup = () => (
  <Group w={131} label="Clipboard" launch>
    <ClipRow>
      <BigButton $w={46} $gap={11}>
        <Row><PasteIcon /></Row>
        Paste
        <Chevron />
      </BigButton>
      <ClipTools>
        <PlainButton aria-label="Cut"><CutIcon /></PlainButton>
        <PlainButton aria-label="Copy"><CopyIcon /></PlainButton>
        <PlainButton aria-label="Format painter"><PainterIcon /></PlainButton>
      </ClipTools>
    </ClipRow>
  </Group>
);

const FontGroup = () => (
  <Group w={466} label="Font" launch>
    <ToolRows $left={12}>
      <Row>
        <Combo $w={187}>
          <select aria-label="Font"><option>Times New Roman</option></select>
          <Chevron />
        </Combo>
        <Combo $w={64}>
          <select aria-label="Font size"><option>12</option></select>
          <Chevron />
        </Combo>
        <Tool $w={40} aria-label="Grow font"><CaseUp /></Tool>
        <Tool $w={38} aria-label="Shrink font"><CaseUp down /></Tool>
        <Rule />
        <Tool $w={40}><Letter>Aa</Letter></Tool>
        <Drop w={16} label="Change case" />
        <Rule $gap={10} />
        <Tool $w={40} aria-label="Clear formatting"><ClearFmt /></Tool>
      </Row>
      <Row>
        <Tool $w={38}><Letter $bold>B</Letter></Tool>
        <Tool $w={38}><Letter $italic $s={22}>I</Letter></Tool>
        <Tool $w={38}><Letter $deco="underline">U</Letter></Tool>
        <Drop label="Underline style" />
        <Tool $w={48}><Letter $s={18} $deco="line-through">ab</Letter></Tool>
        <Tool $w={38}><Letter $bold $s={18}>x<sub>2</sub></Letter></Tool>
        <Tool $w={38}><Letter $bold $s={18}>x<sup>2</sup></Letter></Tool>
        <Rule />
        <Tool $w={40} aria-label="Text effects"><TextFx /></Tool>
        <Drop w={16} label="Text effects list" />
        <Tool $w={54} aria-label="Highlight"><HighlightIcon /></Tool>
        <Drop w={8} label="Highlight colours" />
        <Tool $w={54} aria-label="Font colour"><FontColor /></Tool>
        <Drop w={8} label="Font colours" />
      </Row>
    </ToolRows>
  </Group>
);

const ParagraphGroup = () => (
  <Group w={374} label="Paragraph" launch>
    <ToolRows $left={11}>
      <Row>
        <Tool $w={38} aria-label="Bullets"><ListIcon kind="bullet" /></Tool>
        <Drop />
        <Tool $w={46} aria-label="Numbering"><ListIcon kind="number" /></Tool>
        <Drop w={16} />
        <Tool $w={46} aria-label="Multilevel list"><ListIcon kind="multi" /></Tool>
        <Drop w={16} />
        <Rule $gap={8} />
        <Tool $w={40} aria-label="Decrease indent"><IndentIcon /></Tool>
        <Tool $w={40} aria-label="Increase indent"><IndentIcon right /></Tool>
        <Rule />
        <Tool $w={40} aria-label="Sort"><SortIcon /></Tool>
        <Rule />
        <Tool $w={40}><Letter $s={26}>¶</Letter></Tool>
      </Row>
      <Row>
        <Tool $w={38} $on aria-label="Align left"><AlignIcon d="M0 1h22M0 7h16M0 13h22M0 19h16" /></Tool>
        <Tool $w={40} aria-label="Center"><AlignIcon d="M0 1h22M3 7h16M0 13h22M3 19h16" /></Tool>
        <Tool $w={38} aria-label="Align right"><AlignIcon d="M0 1h22M6 7h16M0 13h22M6 19h16" /></Tool>
        <Tool $w={40} aria-label="Justify"><AlignIcon d="M0 1h22M0 7h22M0 13h22M0 19h22" /></Tool>
        <Rule />
        <Tool $w={40} aria-label="Line spacing"><SpacingIcon /></Tool>
        <Drop w={16} />
        <Rule $gap={10} />
        <Tool $w={40} aria-label="Shading"><ShadeIcon /></Tool>
        <Drop w={18} />
        <Tool $w={46} aria-label="Borders"><BorderIcon /></Tool>
        <Drop w={16} />
      </Row>
    </ToolRows>
  </Group>
);

const StylesGroup = () => (
  <Group w={379} label="Styles" launch>
    <Gallery>
      <StyleItem><Sample>AaBbCcDc</Sample>¶ Normal</StyleItem>
      <StyleItem><Sample>AaBbCcDc</Sample>¶ No Spac...</StyleItem>
      <StyleItem $on><BigSample>AaB</BigSample>Heading 1</StyleItem>
      <GalleryNav>
        <NavStep $off $h={31} $r="0 6px 0 0" aria-label="Previous styles"><Chevron up color="#a6a6a6" /></NavStep>
        <NavStep $h={30} aria-label="Next styles"><Chevron /></NavStep>
        <NavStep $h={30} $r="0 0 6px 0" aria-label="All styles"><MoreCommands /></NavStep>
      </GalleryNav>
    </Gallery>
  </Group>
);

const RibbonSection = () => (
  <Ribbon>
    <ClipboardGroup />
    <FontGroup />
    <ParagraphGroup />
    <StylesGroup />
    <Group w={136} label="Editing">
      <FindList>
        <FindButton $gap={20}><Row><Lens s={24} c={dark} sw={1.5} />Find</Row><Chevron /></FindButton>
        <FindButton><ReplaceIcon />Replace</FindButton>
        <FindButton $gap={6}><Row><CursorIcon />Select</Row><Chevron /></FindButton>
      </FindList>
    </Group>
    <Group w={86} label="Voice">
      <BigButton $off $gap={9}><Row><MicIcon /></Row>Dictate<Chevron color="#b4b4b4" /></BigButton>
    </Group>
    <Group w={86} label="Editor">
      <BigButton $gap={7}><EditorIcon />Editor</BigButton>
    </Group>
    <Group w={94} label="Add-ins">
      <BigButton $gap={7}><AddinsIcon />Add-ins</BigButton>
    </Group>
    <Group w={86} label="IPRHQ">
      <BigButton><StartLogo>p</StartLogo>Start</BigButton>
    </Group>
    <CollapseBox>
      <PlainButton $h={14} aria-label="Collapse ribbon"><Chevron up w={14} stroke={1.8} /></PlainButton>
    </CollapseBox>
  </Ribbon>
);

const DocumentPage = () => (
  <Page>
    <Heading>Object &amp; Scope</Heading>
    <Para $after={74}>
      <Mark>Qais</Mark> hereby appoints <Mark>Abu Bakr,</Mark> who expressly accepts, as a supplier of the Products hereunder.
    </Para>
    <Para $after={23}>
      In such proposal, details shall be given concerning: (<Misspelt>i</Misspelt>) the proposed Additional Service, the<br />
      Products (if any) and Service Levels (if any); (ii) the number of Working Days needed for<br />
      providing the requested Additional Service, the planning for rendering such services and the<br />
      applicable payment terms; (iii) the fees payable by Customer to Service Provider; these fees shall<br />
      be calculated on the basis of the then applicable pricing terms; (iv) the impact on Customer’s<br />
      operations; (v) the impact on any other obligations of the Parties in the framework of this<br />
      Agreement (such as, but not limited to, Maintenance, Maintenance Fees, Services in the context<br />
      of disaster recovery).
    </Para>
    <Para>
      In the event <Mark>Qais</Mark> rejects <Mark>Abu Bakr</Mark>’s proposal, <Mark>Qais</Mark> shall maintain the confidentiality of <Mark>Abu</Mark><br />
      <Mark>Bakr</Mark>'s proposal in accordance with this Agreement.
    </Para>
  </Page>
);

const AddinPane = () => (
  <Pane>
    <PaneHead>
      <h2>IPRHQ</h2>
      <PlainButton $w={68} aria-label="Pane options"><Chevron w={20} stroke={1.6} /></PlainButton>
      <PlainButton $w={30} aria-label="Close pane"><Cross /></PlainButton>
    </PaneHead>
    <PaneFrame>
      <PaneForm onSubmit={(e) => e.preventDefault()}>
        <FormRow><Submit type="button" $w={156}>Replace Text</Submit></FormRow>
        <hr />
        <FormRow>
          <Field placeholder="PM ID" aria-label="PM ID" />
          <Submit type="button" $h={48}>Import</Submit>
        </FormRow>
        <SearchRow><Field placeholder="Search" aria-label="Search clauses" /></SearchRow>
        <Results />
        <Preview placeholder="Text Preview" aria-label="Text Preview" />
        <FormRow><Submit type="button">Insert</Submit></FormRow>
      </PaneForm>
      <Scrollbar w={23} bg="#fcfcfc" c="#8b8b8b" thumb={13} gap={45} len={54} />
    </PaneFrame>
  </Pane>
);

const StatusSection = () => (
  <StatusBar>
    <Row $gap={28}>
      <StatusButton>Page 1 of 1</StatusButton>
      <StatusButton>147 words</StatusButton>
      <StatusButton aria-label="Proofing"><ProofIcon /></StatusButton>
      <StatusButton>Text Predictions: On</StatusButton>
      <StatusButton><AccessIcon />Accessibility: Good to go</StatusButton>
    </Row>
    <StatusRight>
      <StatusButton $w={98}><FocusIcon />Focus</StatusButton>
      <StatusButton $w={60} aria-label="Read mode"><ReadIcon /></StatusButton>
      <StatusButton $w={60} $on aria-label="Print layout"><PrintIcon /></StatusButton>
      <StatusButton $w={60} aria-label="Web layout"><WebIcon /></StatusButton>
      <StatusButton $w={26} aria-label="Zoom out"><PlusMinus /></StatusButton>
      <ZoomRange type="range" min="10" max="168" defaultValue="80" aria-label="Zoom" />
      <StatusButton $w={16} aria-label="Zoom in"><PlusMinus plus /></StatusButton>
      <StatusButton $w={58}>89%</StatusButton>
    </StatusRight>
  </StatusBar>
);

const TaskSection = () => (
  <TaskBar>
    <TaskStart>
      <TaskButton $w={72} aria-label="Start"><WindowsIcon /></TaskButton>
      <TaskButton $w={72} aria-label="Search"><Lens s={33} c="#fff" sw={2.2} /></TaskButton>
      <TaskButton $w={72} aria-label="Task view"><TaskViewIcon /></TaskButton>
      <TaskButton $w={48}>Links</TaskButton>
    </TaskStart>
    <TaskButton aria-label="Copilot"><CopilotIcon /></TaskButton>
    <TaskButton $open aria-label="File Explorer"><FolderIcon /></TaskButton>
    <TaskButton aria-label="Edge"><EdgeIcon /></TaskButton>
    <TaskButton $open aria-label="Chrome"><ChromeIcon /></TaskButton>
    <TaskButton $open aria-label="Code"><CodeIcon /></TaskButton>
    <TaskButton $open aria-label="Skype"><SkypeIcon /></TaskButton>
    <TaskButton $open aria-label="Node"><NodeIcon /></TaskButton>
    <TaskButton $open $on aria-label="Word"><WordLogo s={35} /></TaskButton>
    <Tray>
      <TaskButton $w={48} aria-label="Hidden icons"><Chevron up w={18} color="#fff" stroke={1.6} /></TaskButton>
      <TaskButton $w={48} aria-label="Network"><WifiIcon /></TaskButton>
      <TaskButton $w={48} aria-label="Meet now"><CameraIcon /></TaskButton>
      <TaskButton $w={48} aria-label="Battery"><BatteryIcon /></TaskButton>
      <TaskButton $w={48} aria-label="Volume"><SoundIcon /></TaskButton>
      <Clock>10:17 PM<br />11/26/2024</Clock>
      <TaskButton $w={48} aria-label="Notifications"><NoteIcon /></TaskButton>
      <Peek />
    </Tray>
  </TaskBar>
);

export default function App() {
  return (
    <Shell>
      <GlobalStyle />
      <TitleSection />
      <TabSection />
      <RibbonSection />
      <Workspace>
        <Canvas><DocumentPage /></Canvas>
        <Scrollbar w={26} r={12} bg="#f5f5f5" c="#6f6f6f" thumb={12} gap={7} len={48} />
        <AddinPane />
      </Workspace>
      <StatusSection />
      <TaskSection />
    </Shell>
  );
}
